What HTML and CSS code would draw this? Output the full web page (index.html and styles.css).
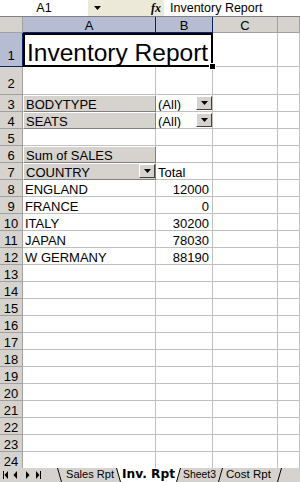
FILE: index.html
```html
<!DOCTYPE html>
<html lang="en">
<head>
    <meta charset="UTF-8">
    <meta name="viewport" content="width=device-width, initial-scale=1.0">
    <title>Inventory Report</title>
    <link rel="stylesheet" href="styles.css">
</head>
<body>

<div class="formula-bar">
    <div class="name-box">A1</div>
    <div class="name-drop">
        <svg width="7" height="4" viewBox="0 0 7 4"><path d="M0 0h7L3.5 4z" fill="#000"/></svg>
    </div>
    <div class="fx">fx</div>
    <div class="formula-input">Inventory Report</div>
</div>

<div class="sheet">
    <div class="row col-heads">
        <div class="cell head corner"></div>
        <div class="cell head selected">A</div>
        <div class="cell head selected">B</div>
        <div class="cell head">C</div>
        <div class="cell head"></div>
    </div>

    <div class="row row-tall">
        <div class="cell head selected tall-label">1</div>
        <div class="cell title">Inventory Report<span class="handle"></span></div>
        <div class="cell"></div>
        <div class="cell"></div>
    </div>
    <div class="row row-gap">
        <div class="cell head tall-label">2</div>
        <div class="cell"></div><div class="cell"></div><div class="cell"></div><div class="cell"></div>
    </div>
    <div class="row">
        <div class="cell head">3</div>
        <div class="cell field">BODYTYPE</div>
        <div class="cell page-value">(All)<span class="drop"><svg width="7" height="4" viewBox="0 0 7 4"><path d="M0 0h7L3.5 4z" fill="#000"/></svg></span></div>
        <div class="cell"></div><div class="cell"></div>
    </div>
    <div class="row">
        <div class="cell head">4</div>
        <div class="cell field">SEATS</div>
        <div class="cell page-value">(All)<span class="drop"><svg width="7" height="4" viewBox="0 0 7 4"><path d="M0 0h7L3.5 4z" fill="#000"/></svg></span></div>
        <div class="cell"></div><div class="cell"></div>
    </div>
    <div class="row">
        <div class="cell head">5</div>
        <div class="cell"></div><div class="cell"></div><div class="cell"></div><div class="cell"></div>
    </div>
    <div class="row">
        <div class="cell head">6</div>
        <div class="cell field">Sum of SALES</div>
        <div class="cell"></div><div class="cell"></div><div class="cell"></div>
    </div>
    <div class="row">
        <div class="cell head">7</div>
        <div class="cell field">COUNTRY<span class="drop"><svg width="7" height="4" viewBox="0 0 7 4"><path d="M0 0h7L3.5 4z" fill="#000"/></svg></span></div>
        <div class="cell">Total</div>
        <div class="cell"></div><div class="cell"></div>
    </div>
    <div class="row">
        <div class="cell head">8</div>
        <div class="cell">ENGLAND</div>
        <div class="cell num">12000</div>
        <div class="cell"></div><div class="cell"></div>
    </div>
    <div class="row">
        <div class="cell head">9</div>
        <div class="cell">FRANCE</div>
        <div class="cell num">0</div>
        <div class="cell"></div><div class="cell"></div>
    </div>
    <div class="row">
        <div class="cell head">10</div>
        <div class="cell">ITALY</div>
        <div class="cell num">30200</div>
        <div class="cell"></div><div class="cell"></div>
    </div>
    <div class="row">
        <div class="cell head">11</div>
        <div class="cell">JAPAN</div>
        <div class="cell num">78030</div>
        <div class="cell"></div><div class="cell"></div>
    </div>
    <div class="row">
        <div class="cell head">12</div>
        <div class="cell">W GERMANY</div>
        <div class="cell num">88190</div>
        <div class="cell"></div><div class="cell"></div>
    </div>
    <div class="row"><div class="cell head">13</div><div class="cell"></div><div class="cell"></div><div class="cell"></div><div class="cell"></div></div>
    <div class="row"><div class="cell head">14</div><div class="cell"></div><div class="cell"></div><div class="cell"></div><div class="cell"></div></div>
    <div class="row"><div class="cell head">15</div><div class="cell"></div><div class="cell"></div><div class="cell"></div><div class="cell"></div></div>
    <div class="row"><div class="cell head">16</div><div class="cell"></div><div class="cell"></div><div class="cell"></div><div class="cell"></div></div>
    <div class="row"><div class="cell head">17</div><div class="cell"></div><div class="cell"></div><div class="cell"></div><div class="cell"></div></div>
    <div class="row"><div class="cell head">18</div><div class="cell"></div><div class="cell"></div><div class="cell"></div><div class="cell"></div></div>
    <div class="row"><div class="cell head">19</div><div class="cell"></div><div class="cell"></div><div class="cell"></div><div class="cell"></div></div>
    <div class="row"><div class="cell head">20</div><div class="cell"></div><div class="cell"></div><div class="cell"></div><div class="cell"></div></div>
    <div class="row"><div class="cell head">21</div><div class="cell"></div><div class="cell"></div><div class="cell"></div><div class="cell"></div></div>
    <div class="row"><div class="cell head">22</div><div class="cell"></div><div class="cell"></div><div class="cell"></div><div class="cell"></div></div>
    <div class="row"><div class="cell head">23</div><div class="cell"></div><div class="cell"></div><div class="cell"></div><div class="cell"></div></div>
    <div class="row"><div class="cell head">24</div><div class="cell"></div><div class="cell"></div><div class="cell"></div><div class="cell"></div></div>
</div>

<div class="tab-bar">
    <svg class="tab-nav" width="56" height="14" viewBox="0 0 56 14">
        <path d="M3 3h1v8H3z M8 3v8L4.5 7z" fill="#000"/>
        <path d="M17 3v8L13.5 7z" fill="#000"/>
        <path d="M26 3v8L29.5 7z" fill="#000"/>
        <path d="M36 3v8L39.5 7z M40 3h1v8h-1z" fill="#000"/>
    </svg>
    <svg class="tabs" width="244" height="14" viewBox="0 0 244 14">
        <path d="M1.5 0L5.5 14 M166.5 0L162.5 14 M225.5 0L221.5 14" stroke="#000" fill="none"/>
        <path d="M60.5 0H124.5L120.5 14H64.5z" fill="#fff"/>
        <path d="M60.5 0L64.5 14 M124.5 0L120.5 14" stroke="#000" fill="none"/>
        <text x="10" y="10" class="tab-label" textLength="48" lengthAdjust="spacingAndGlyphs">Sales Rpt</text>
        <text x="66" y="10" class="tab-label active" textLength="53" lengthAdjust="spacingAndGlyphs">Inv. Rpt</text>
        <text x="127" y="10" class="tab-label" textLength="33" lengthAdjust="spacingAndGlyphs">Sheet3</text>
        <text x="170" y="10" class="tab-label" textLength="45" lengthAdjust="spacingAndGlyphs">Cost Rpt</text>
    </svg>
</div>

</body>
</html>
```

FILE: styles.css
```css
* {
    box-sizing: border-box;
}

body {
    margin: 0;
    width: 300px;
    height: 482px;
    overflow: hidden;
    font-family: "Liberation Sans", Arial, sans-serif;
    font-size: 13px;
    color: #000;
    background-color: #fff;
    display: flex;
    flex-direction: column;
}

/* Formula bar */
.formula-bar {
    flex: none;
    height: 17px;
    display: flex;
    background-color: #ece9d8;
    border-bottom: 1px solid #808080;
}

.name-box {
    width: 88px;
    background-color: #fff;
    text-align: center;
    line-height: 16px;
    font-size: 12.5px;
}

.name-drop {
    width: 18px;
    display: flex;
    align-items: center;
    justify-content: center;
}

.fx {
    width: 58px;
    text-align: right;
    padding-right: 3px;
    font-family: "Liberation Serif", serif;
    font-style: italic;
    font-weight: bold;
    font-size: 12px;
    line-height: 16px;
}

.formula-input {
    flex: 1;
    background-color: #fff;
    padding-left: 6px;
    line-height: 16px;
    font-size: 12.5px;
}

/* Grid */
.sheet {
    flex: 1;
    overflow: hidden;
}

.row {
    display: grid;
    grid-template-columns: 23px 133px 57px 65px 22px;
    height: 17px;
}

.col-heads {
    height: 16px;
}

.row-tall {
    height: 34px;
}

.row-gap {
    height: 28px;
}

.cell {
    display: flex;
    align-items: flex-end;
    padding: 0 2px;
    line-height: 13px;
    white-space: nowrap;
    overflow: hidden;
    border-right: 1px solid #c0c0c0;
    border-bottom: 1px solid #c0c0c0;
}

.num {
    justify-content: flex-end;
    padding-right: 3px;
}

.head {
    justify-content: center;
    padding: 0;
    background-color: #d6d3ce;
    border-right-color: #a0a0a0;
    border-bottom-color: #a0a0a0;
}

.head.selected {
    background-color: #b6bdd2;
    border-right-color: #0a246a;
    border-bottom-color: #0a246a;
}

.tall-label {
    padding-bottom: 4px;
}

.title {
    grid-column: span 2;
    position: relative;
    overflow: visible;
    border: 2px solid #000;
    padding-left: 2px;
    font-size: 24.5px;
    line-height: 24px;
}

.handle {
    position: absolute;
    right: -5px;
    bottom: -5px;
    width: 7px;
    height: 7px;
    background-color: #000;
    border: 1px solid #fff;
    z-index: 2;
}

/* Pivot table buttons */
.field {
    justify-content: space-between;
    padding: 0 0 0 2px;
    background-color: #d6d3ce;
    border-top: 1px solid #fff;
    border-left: 1px solid #fff;
    border-right-color: #808080;
    border-bottom-color: #808080;
}

.page-value {
    justify-content: space-between;
    padding-right: 0;
}

.drop {
    flex: none;
    width: 16px;
    height: 14px;
    margin-bottom: 1px;
    display: flex;
    align-items: center;
    justify-content: center;
    background-color: #d6d3ce;
    border: 1px solid;
    border-color: #fff #404040 #404040 #fff;
}

/* Sheet tabs */
.tab-bar {
    flex: none;
    height: 14px;
    display: flex;
    background-color: #d6d3ce;
}

.tab-label {
    font-family: "Liberation Sans", Arial, sans-serif;
    font-size: 11px;
    fill: #000;
}

.tab-label.active {
    font-family: "DejaVu Sans", sans-serif;
    font-weight: bold;
    font-size: 12px;
}
```
